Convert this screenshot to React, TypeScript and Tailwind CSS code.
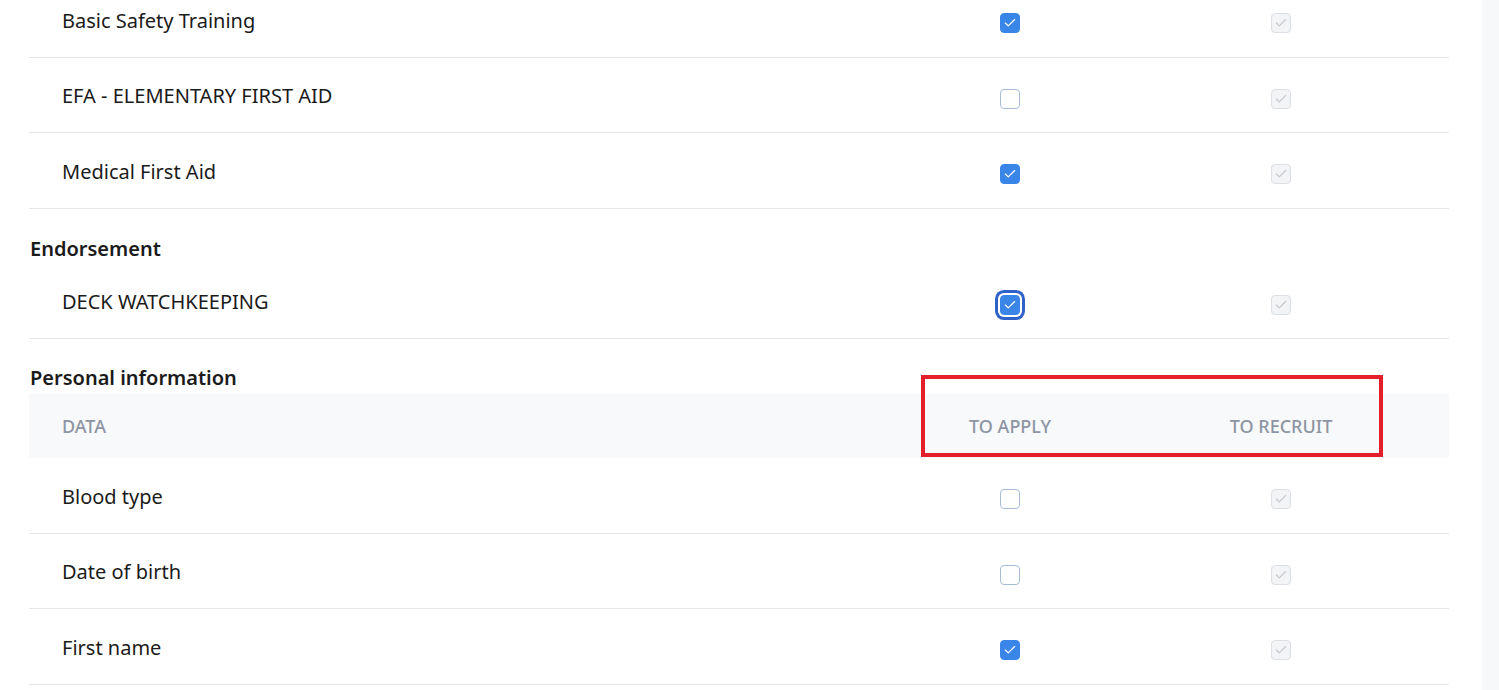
import { Check } from "lucide-react";

type Row = { label: string; apply: boolean; focused?: boolean };

type Section = { title?: string; header?: boolean; rows: Row[] };

const sections: Section[] = [
	{
		rows: [
			{ label: "Basic Safety Training", apply: true },
			{ label: "EFA - ELEMENTARY FIRST AID", apply: false },
			{ label: "Medical First Aid", apply: true },
		],
	},
	{
		title: "Endorsement",
		rows: [{ label: "DECK WATCHKEEPING", apply: true, focused: true }],
	},
	{
		title: "Personal information",
		header: true,
		rows: [
			{ label: "Blood type", apply: false },
			{ label: "Date of birth", apply: false },
			{ label: "First name", apply: true },
		],
	},
];

function Checkbox({ checked, focused }: { checked: boolean; focused?: boolean }) {
	return (
		<span
			className={`flex size-5 items-center justify-center rounded-[4px] border ${
				checked ? "border-[#3a86e8] bg-[#3a86e8]" : "border-[#a9bcd6] bg-white"
			} ${focused ? "ring-[3px] ring-[#2f62c9] ring-offset-2" : ""}`}
		>
			{checked && <Check className="size-3.5 text-white" strokeWidth={2} />}
		</span>
	);
}

function DisabledCheckbox() {
	return (
		<span className="flex size-5 items-center justify-center rounded-[4px] border border-[#dcdfe4] bg-[#f3f4f6]">
			<Check className="size-3.5 text-[#c4c8ce]" strokeWidth={2} />
		</span>
	);
}

export default function App() {
	return (
		<div className="flex h-[690px] w-full overflow-hidden bg-white font-['Noto_Sans',sans-serif] text-[#1b1b1b]">
			<div className="relative w-[1482px] shrink-0">
				<div className="-mt-[18px] ml-[29px] w-[1420px]">
					{sections.map((section, si) => (
						<div key={si}>
							{section.title && (
								<div
									className={`h-[55px] pl-px text-[20px] leading-[28px] font-semibold ${
										section.header ? "pt-[25px]" : "pt-[26px]"
									}`}
								>
									{section.title}
								</div>
							)}
							{section.header && (
								<div className="grid h-16 grid-cols-[878px_206px_336px] items-center bg-[#f8f9fb] text-[18px] font-medium text-[#8d95a2]">
									<div className="pl-[33px]">DATA</div>
									<div className="text-center">TO APPLY</div>
									<div className="text-center">TO RECRUIT</div>
								</div>
							)}
							{section.rows.map((row) => (
								<div
									key={row.label}
									className="grid h-[75.5px] grid-cols-[878px_206px_336px] items-center border-b border-[#e4e6ea]"
								>
									<div className="pt-[3px] pl-[33px] text-[20px]">{row.label}</div>
									<div className="flex justify-center pt-[8px]">
										<Checkbox checked={row.apply} focused={row.focused} />
									</div>
									<div className="flex justify-center pt-[8px]">
										<DisabledCheckbox />
									</div>
								</div>
							))}
						</div>
					))}
				</div>
				<div className="pointer-events-none absolute top-[375px] left-[921px] h-[82px] w-[462px] border-4 border-[#e3202a]" />
			</div>
			<div className="grow bg-[#f7f8fa]" />
		</div>
	);
}
